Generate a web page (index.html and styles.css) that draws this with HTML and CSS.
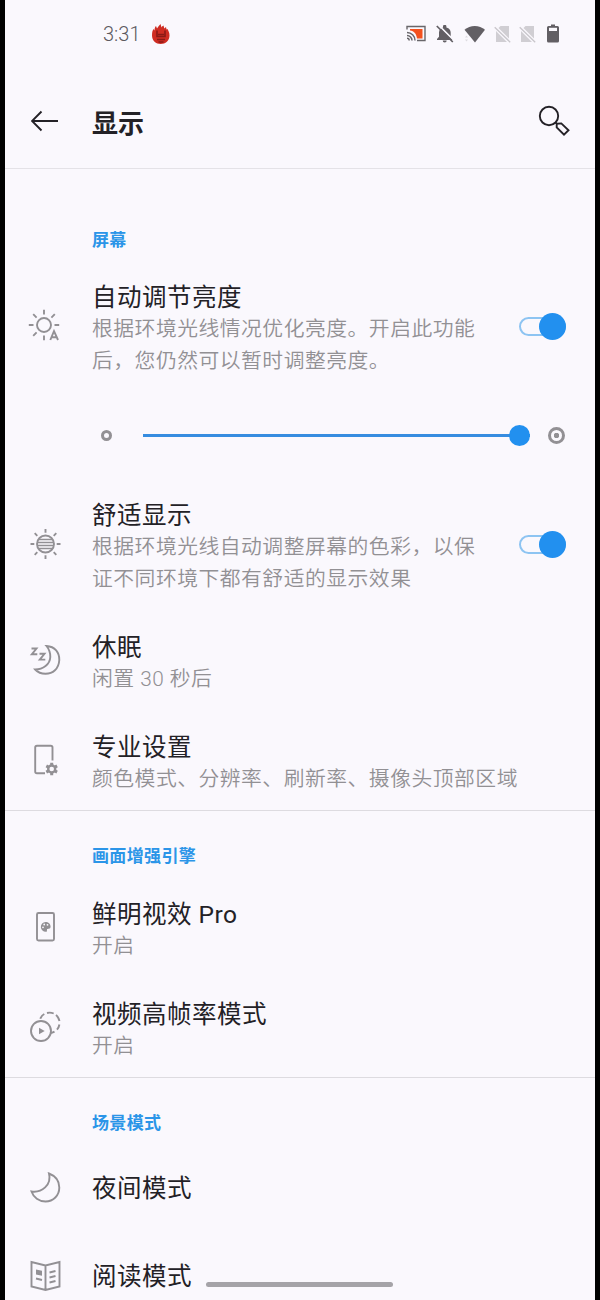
FILE: index.html
```html
<!DOCTYPE html>
<html lang="zh-CN">
<head>
<meta charset="utf-8">
<title>显示</title>
<link rel="stylesheet" href="styles.css">
</head>
<body>
<main class="screen">
  <div class="status">
    <span class="time">3:31</span>
    <svg class="app" width="20" height="22" viewBox="0 0 20 22"><path d="M1 12.500C1 9 1.500 7.500 2.500 6l1 1.500c0-2 .5-3.500 1.500-4.500l1 2.500c1-1.500 2-3 3.500-4.500l1 3.500c.5-1 1-1.500 2-2l.8 3 1.700-1.500.5 2.500 1-.5c1 2 2 3.500 2 6.500 0 5-4 8.500-8.800 8.500S1 17.500 1 12.500z" fill="#cf2c22"/><path d="M6 7.500v6h8v-6M7 11.500h6M6 16.500h8M7.500 19h5" fill="none" stroke="#8a1a16" stroke-width="1.600"/></svg>
    <span class="space"></span>
    <svg class="st cast" width="20" height="17" viewBox="0 0 20 17"><path d="M1 4.500V1.500h18v14h-8" fill="none" stroke="#68666a" stroke-width="1.400"/><path d="M4 4h12.500v9.500H11C10.500 9 8 6 4 5.500z" fill="#f4511e"/><path d="M1 7.500a8 8 0 0 1 8 8M1 10.500a5 5 0 0 1 5 5M1 13.300a2.200 2.200 0 0 1 2.200 2.200" fill="none" stroke="#68666a" stroke-width="1.500"/></svg>
    <svg class="st bell" width="18" height="18" viewBox="0 0 18 18"><path d="M3 7.500C3 4.500 5 3 7 2.400V1.500a1.700 1.700 0 0 1 3.400 0v.900c3 .700 4.300 2.900 4.300 5.400v4l2 2.200v1H1v-1l2-2.200zM6.700 15.600h4a2 2 0 0 1-4 0z" fill="#625f64"/><path d="M2.500 0l16 16" stroke="#faf8fd" stroke-width="1.600"/><path d="M.800 1l16 16" stroke="#625f64" stroke-width="1.700"/></svg>
    <svg class="st wifi" width="22" height="18" viewBox="0 0 22 18"><path d="M.500 4.800C6-.300 15.500-.300 21 4.800L11 17.500z" fill="#625f64"/><path d="M1 12.500l1.500-2L4 12.500zM1 14.500h3l-1.500 2z" fill="#dddbe0"/></svg>
    <svg class="st sim" width="17" height="18" viewBox="0 0 17 18"><path d="M2 6v11h11zM4.500 3L6.500 1H15v12.500z" fill="#d0ced3"/><path d="M.700 2.200l15.500 15" stroke="#c8c6cb" stroke-width="1.300"/></svg>
    <svg class="st sim2" width="17" height="18" viewBox="0 0 17 18"><path d="M2 6v11h11zM4.500 3L6.500 1H15v12.500z" fill="#d0ced3"/><path d="M.700 2.200l15.500 15" stroke="#c8c6cb" stroke-width="1.300"/></svg>
    <svg class="st" width="12" height="19" viewBox="0 0 12 19"><path d="M4 .500h4v1.500h2.500Q12 2 12 3.500V17q0 1.500-1.500 1.500h-9Q0 18.500 0 17V3.500Q0 2 1.500 2H4z" fill="#625f64"/><path d="M2 3.800h8v3.200H2z" fill="#faf8fd"/></svg>
  </div>
  <header class="header">
    <svg class="back" width="28" height="22" viewBox="0 0 28 22"><path d="M27 11H1.500M10.500 1.500L1 11l9.500 9.500" fill="none" stroke="#232126" stroke-width="1.900"/></svg>
    <h1>显示</h1>
    <svg width="32" height="32" viewBox="0 0 32 32"><g fill="none" stroke="#232126" stroke-width="1.900"><circle cx="11" cy="11" r="9.200"/><path d="M17.500 17.500l1.200 1.200v3.600l7.300 7.400 4.500-4.500-7.200-6.800-4.600.3"/></g></svg>
  </header>

  <section>
    <h2 class="first">屏幕</h2>
    <div class="row tall">
      <svg class="icon" viewBox="0 0 36 36"><circle cx="17" cy="17" r="7"/><path d="M17 1.800v4.700M17 27.500v4.700M1.800 17h4.700M27.500 17h4.700M6.200 6.200l3.400 3.400M24.400 9.600l3.400-3.400M6.200 27.800l3.400-3.400"/><path d="M23.300 32l3.700-8.800 4 8.800M24.300 29.200h5.400"/></svg>
      <div class="text"><h3>自动调节亮度</h3><p>根据环境光线情况优化亮度。开启此功能<br>后，您仍然可以暂时调整亮度。</p></div>
      <span class="toggle"></span>
    </div>
    <div class="slider"><span class="low"></span><span class="track"><span class="thumb"></span></span><span class="high"></span></div>
    <div class="row tall">
      <svg class="icon" viewBox="0 0 36 36"><circle cx="18.500" cy="18" r="8.500"/><path d="M12 13.500h13M10.500 16.500h16M10.500 19.500h16M12 22.500h13" stroke-width="1.500"/><path d="M18.500 3v3.800M18.500 29.200V33M3.500 18h3.800M29.700 18h3.800M7.700 7.200l2.600 2.600M26.700 9.800l2.600-2.600M7.700 28.800l2.600-2.600M26.700 26.200l2.600 2.600"/></svg>
      <div class="text"><h3>舒适显示</h3><p>根据环境光线自动调整屏幕的色彩，以保<br>证不同环境下都有舒适的显示效果</p></div>
      <span class="toggle"></span>
    </div>
    <div class="row">
      <svg class="icon" viewBox="0 0 36 36"><path d="M19.500 4C28 4.500 32.500 10.500 32.300 18c-.500 9-6.500 13.800-13.800 13.800-4.500 0-8-1.800-10.300-4.300C16 27.500 23 22.500 23.300 15c.100-4.500-1.300-8-3.800-11z"/><path d="M4.500 6.500h5L4.800 12.300h5.500M12.500 11.800h5L12.800 17.600h5.500" stroke-width="1.900"/></svg>
      <div class="text"><h3>休眠</h3><p>闲置 30 秒后</p></div>
    </div>
    <div class="row">
      <svg class="icon" viewBox="0 0 36 36"><path d="M25.500 18.500V5.500q0-1.800-1.800-1.800H10q-1.800 0-1.800 1.800v24q0 1.800 1.800 1.800h8"/><circle cx="24.700" cy="27" r="3.500" stroke-width="2.400"/><path d="M24.700 20.800v2.500M24.700 30.700v2.500M19.300 23.900l2.200 1.200M27.900 28.900l2.200 1.200M19.300 30.100l2.200-1.200M27.900 25.100l2.200-1.200" stroke-width="3"/></svg>
      <div class="text"><h3>专业设置</h3><p>颜色模式、分辨率、刷新率、摄像头顶部区域</p></div>
    </div>
  </section>

  <section>
    <h2>画面增强引擎</h2>
    <div class="row">
      <svg class="icon" viewBox="0 0 36 36"><rect x="10" y="4" width="17" height="27.500" rx="1.500"/><path d="M18.500 13a4.900 4.900 0 1 0 .500 9.800c1.300 0 .800-1.500 1-2.400.300-1 3.600.200 3.600-2.600 0-2.800-2.200-4.800-5.100-4.800z" fill="#929094" stroke="none"/><g fill="#faf8fd" stroke="none"><circle cx="16" cy="18.300" r=".9"/><circle cx="17.200" cy="15.500" r=".9"/><circle cx="20.500" cy="15.800" r=".9"/></g></svg>
      <div class="text"><h3>鲜明视效 Pro</h3><p>开启</p></div>
    </div>
    <div class="row">
      <svg class="icon" viewBox="0 0 36 36"><circle cx="14" cy="22" r="10"/><path d="M12 18.800v6.400l5.700-3.200z" fill="#929094" stroke="none"/><path d="M13.300 9.800Q14.500 6.500 17.300 5M20 4q3.500-.900 6.700.500M29 6q2.800 2.500 3.500 6M32.400 15.500q-.500 3-2.400 5.200M27.500 22.600q-1.500.900-3.500 1.400"/></svg>
      <div class="text"><h3>视频高帧率模式</h3><p>开启</p></div>
    </div>
  </section>

  <section>
    <h2>场景模式</h2>
    <div class="row single">
      <svg class="icon" viewBox="0 0 36 36"><path d="M22 3.500C28.500 6 32.300 11 32.300 17.500c0 8-6 14-13.800 14-6.500 0-12-4-14-10C14.500 23 25 15 22 3.500z"/></svg>
      <div class="text"><h3>夜间模式</h3></div>
    </div>
    <div class="row single">
      <svg class="icon" viewBox="0 0 36 36"><path d="M18.500 7.500L4.500 4v24.500l14 3.500 14-3.500V4zM18.500 7.500V32M22.500 14.500l6-1.500M22.500 19.500l6-1.500M22.500 24.500l6-1.500M9 20.500l6 1.500"/><path d="M9 11.500l6 1.200v5L9 16.500z" fill="#929094" stroke="none"/></svg>
      <div class="text"><h3>阅读模式</h3></div>
    </div>
  </section>
  <span class="home"></span>
</main>
</body>
</html>
```
FILE: styles.css
```css
* { box-sizing: border-box; }
body { margin: 0; background: #000; }
.screen {
  position: relative;
  height: 1300px;
  margin: 0 5px;
  overflow: hidden;
  background: #faf8fd;
  color: #232126;
  font-family: Roboto, "Noto Sans CJK SC", sans-serif;
}
svg { display: block; flex: none; }
h1, h2, h3, p { margin: 0; }
.status {
  display: flex;
  align-items: center;
  height: 67px;
  padding: 0 36px 0 98px;
}
.time { font-size: 20px; font-weight: 350; color: #5c5a5f; }
.app { margin-left: 11px; margin-top: 1px; }
.space { flex: 1; }
.cast { margin-right: 10px; }
.bell { margin-right: 10px; }
.wifi { margin-right: 8px; }
.sim { margin-right: 8px; }
.sim2 { margin-right: 11px; }
.header {
  display: flex;
  align-items: center;
  height: 102px;
  padding: 7px 25px 0 26px;
  border-bottom: 1px solid #e4e2e7;
}
.header h1 {
  flex: 1;
  margin-left: 33px;
  padding-top: 5px;
  font-size: 26px;
  line-height: 40px;
  font-weight: 700;
}
section + section { border-top: 1px solid #dddbe0; }
h2 {
  height: 66px;
  padding: 33px 0 0 87px;
  font-size: 17px;
  line-height: 24px;
  font-weight: 700;
  letter-spacing: .35px;
  color: #2b95e8;
}
h2.first { height: 91px; padding-top: 59px; }
.row {
  display: flex;
  align-items: center;
  height: 100px;
  padding: 0 29px 0 22px;
}
.row.tall { height: 132px; }
.row.single { height: 88px; }
.icon {
  width: 36px;
  height: 36px;
  fill: none;
  stroke: #929094;
  stroke-width: 1.9;
}
.text { flex: 1; margin-left: 29px; padding-top: 8px; white-space: nowrap; }
.single .text { padding-top: 2px; }
h3 { margin: -1px 0 1px; font-size: 24.5px; line-height: 31px; font-weight: 400; letter-spacing: .5px; }
p { font-size: 20.8px; line-height: 31.3px; font-weight: 350; letter-spacing: .5px; color: #929094; }
.toggle {
  position: relative;
  width: 47px;
  height: 19px;
  border: 2px solid #8dc4f2;
  border-radius: 10px;
}
.toggle::after {
  content: "";
  position: absolute;
  right: -2px;
  top: -6px;
  width: 27px;
  height: 27px;
  border-radius: 50%;
  background: #2290ef;
}
.slider {
  display: flex;
  align-items: center;
  height: 86px;
  padding: 0 30px 0 96px;
}
.low { width: 11px; height: 11px; border: 3px solid #929094; border-radius: 50%; }
.track {
  display: flex;
  align-items: center;
  justify-content: flex-end;
  flex: 1;
  height: 3px;
  margin: 0 18px 0 31px;
  background: #368ce0;
}
.thumb { flex: none; width: 21px; height: 21px; border-radius: 50%; background: #2290ef; }
.high {
  width: 17px;
  height: 17px;
  border: 3px solid #929094;
  border-radius: 50%;
  background: radial-gradient(circle, #929094 2.5px, transparent 3px);
}
.home {
  position: absolute;
  left: 201px;
  bottom: 13px;
  width: 187px;
  height: 5px;
  border-radius: 3px;
  background: #a5a3a8;
}
```
